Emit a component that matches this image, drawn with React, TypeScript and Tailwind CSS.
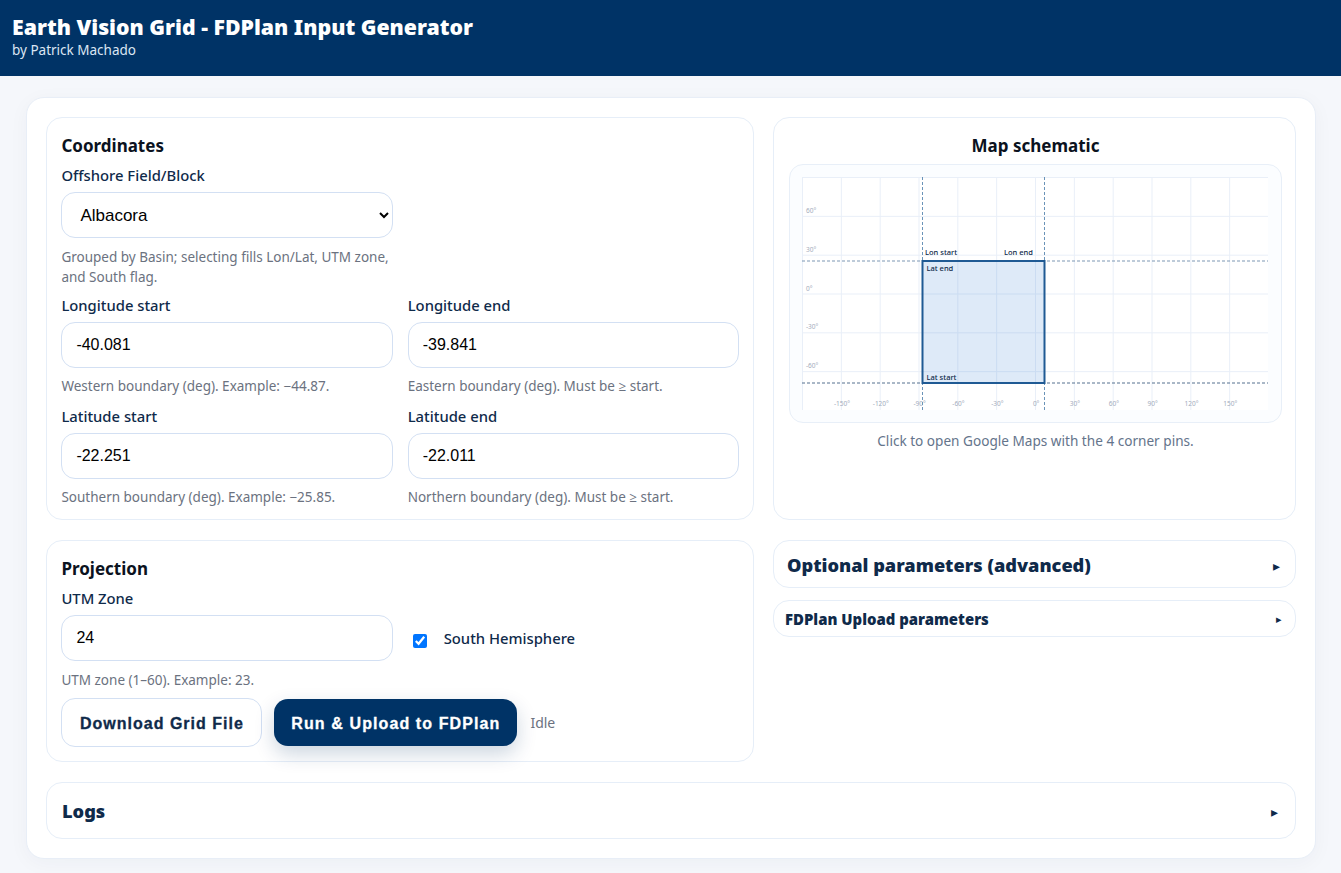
import React from "react";

const sans = "font-['Noto_Sans','Open_Sans',sans-serif]";
const LAT = [60, 30, 0, -30, -60];
const LON = [-150, -120, -90, -60, -30, 0, 30, 60, 90, 120, 150];

function Field({ label, value, hint }: { label: string; value: string; hint: string }) {
  return (
    <div>
      <label className="block text-[14.8px] leading-[20px] font-medium text-[#0f2a4a] mb-[7px]">{label}</label>
      <input
        defaultValue={value}
        className="block w-full h-[46px] rounded-[14px] border border-[#d3e0f3] bg-white pl-[14px] pr-[15px] text-[16px] text-black font-['Liberation_Sans',sans-serif] outline-none"
      />
      <p className="mt-[8px] text-[13.5px] leading-[20px] text-[#6b7280]">{hint}</p>
    </div>
  );
}

function Map() {
  const x0 = 0.5;
  const s = 466 / 360;
  return (
    <svg width="466" height="233" viewBox="0 0 466 233" className="block">
      <rect x="0" y="0" width="466" height="233" fill="#ffffff" />
      {Array.from({ length: 13 }).map((_, i) => (
        <line key={i} x1={x0 + i * 30 * s} y1="0" x2={x0 + i * 30 * s} y2="233" stroke="#e9eff8" strokeWidth="1" />
      ))}
      {Array.from({ length: 7 }).map((_, i) => (
        <line key={i} x1="0" y1={0.5 + i * 30 * s} x2="466" y2={0.5 + i * 30 * s} stroke="#e9eff8" strokeWidth="1" />
      ))}
      {LAT.map((v, i) => (
        <text key={v} x="4" y={36 + i * 38.83} fontSize="6.5" fill="#a3acbc" fontFamily="Noto Sans, sans-serif">{v}°</text>
      ))}
      {LON.map((v, i) => (
        <text key={v} x={40 + i * 38.83} y="229" fontSize="6.5" textAnchor="middle" fill="#a3acbc" fontFamily="Noto Sans, sans-serif">{v}°</text>
      ))}
      <line x1="120.5" y1="0" x2="120.5" y2="233" stroke="#6a93b8" strokeWidth="1" strokeDasharray="3 2" />
      <line x1="242.5" y1="0" x2="242.5" y2="233" stroke="#6a93b8" strokeWidth="1" strokeDasharray="3 2" />
      <line x1="0" y1="84" x2="466" y2="84" stroke="#7d97b3" strokeWidth="1" strokeDasharray="3 2" />
      <line x1="0" y1="206" x2="466" y2="206" stroke="#55708f" strokeWidth="1" strokeDasharray="3 2" />
      <rect x="120.5" y="84" width="122" height="122" fill="#1f6fd0" fillOpacity="0.15" stroke="#1f5a94" strokeWidth="2" />
      <g fontSize="7.5" fontWeight="500" fill="#0f2a4a" fontFamily="Noto Sans, sans-serif">
        <text x="123" y="78">Lon start</text>
        <text x="202" y="78">Lon end</text>
        <text x="124.5" y="94">Lat end</text>
        <text x="124.5" y="203">Lat start</text>
      </g>
    </svg>
  );
}

function Collapsed({ title, cls, arrow }: { title: string; cls: string; arrow: string }) {
  return (
    <div className={`flex items-center justify-between rounded-[16px] border border-[#e6eef8] bg-white ${cls}`}>
      <span className="font-black text-[#0f2a4a]">{title}</span>
      <span className={`text-[#0f2a4a] ${arrow}`}>▸</span>
    </div>
  );
}

export default function App() {
  return (
    <div className={`min-h-[873px] bg-[#f5f7fb] ${sans}`}>
      <header className="h-[76px] bg-[#003366] px-[12px] pt-[13px] text-white">
        <h1 className="text-[21.27px] leading-[27px] font-black">Earth Vision Grid - FDPlan Input Generator</h1>
        <p className="text-[13.5px] leading-[18px] mt-[1px] text-[#dbe6f3]">by Patrick Machado</p>
      </header>
      <main className="pl-[26px] pr-[25px] pt-[21px]">
        <div className="h-[762px] rounded-[18px] border border-[#e8eef7] bg-white p-[19px] shadow-[0_4px_20px_rgba(15,42,74,0.04)]">
          <div className="grid grid-cols-[708px_523px] gap-x-[19px] gap-y-[20px]">
            <section className="h-[403px] rounded-[16px] border border-[#e6eef8] pl-[14.4px] pr-[14px] pt-[16px]">
              <h2 className="text-[17px] leading-[24px] font-bold text-[#0b1220] mb-[7px]">Coordinates</h2>
              <div className="grid grid-cols-2 gap-x-[15px] gap-y-[10px]">
                <div className="mb-[-2px]">
                  <label className="block text-[14.8px] leading-[20px] font-medium text-[#0f2a4a] mb-[7px]">Offshore Field/Block</label>
                  <select className="block w-full h-[46px] rounded-[14px] border border-[#d3e0f3] bg-white px-[14px] text-[17px] text-black font-['Liberation_Sans',sans-serif] outline-none">
                    <option>Albacora</option>
                  </select>
                  <p className="mt-[9px] text-[13.5px] leading-[20px] text-[#6b7280]">Grouped by Basin; selecting fills Lon/Lat, UTM zone, and South flag.</p>
                </div>
                <div />
                <Field label="Longitude start" value="-40.081" hint="Western boundary (deg). Example: −44.87." />
                <Field label="Longitude end" value="-39.841" hint="Eastern boundary (deg). Must be ≥ start." />
                <Field label="Latitude start" value="-22.251" hint="Southern boundary (deg). Example: −25.85." />
                <Field label="Latitude end" value="-22.011" hint="Northern boundary (deg). Must be ≥ start." />
              </div>
            </section>

            <section className="h-[403px] rounded-[16px] border border-[#e6eef8] pl-[15px] pr-[13px] pt-[16px]">
              <h2 className="text-center text-[17px] leading-[24px] font-bold text-[#0b1220] mb-[6px]">Map schematic</h2>
              <div className="rounded-[14px] border border-[#e8eff8] bg-[#fbfdff] p-[12px]">
                <Map />
              </div>
              <p className="mt-[8px] text-center text-[13.6px] leading-[20px] text-[#64748b]">Click to open Google Maps with the 4 corner pins.</p>
            </section>

            <section className="h-[222px] rounded-[16px] border border-[#e6eef8] pl-[14.4px] pr-[14px] pt-[16px]">
              <h2 className="text-[17px] leading-[24px] font-bold text-[#0b1220] mb-[7px]">Projection</h2>
              <label className="block text-[14.8px] leading-[20px] font-medium text-[#0f2a4a] mb-[7px]">UTM Zone</label>
              <div className="grid grid-cols-2 gap-x-[15px]">
                <input defaultValue="24" className="block w-full h-[46px] rounded-[14px] border border-[#d3e0f3] bg-white pl-[14px] pr-[15px] text-[16px] text-black font-['Liberation_Sans',sans-serif] outline-none" />
                <label className="flex items-center gap-[17px] pl-[5px] text-[14.8px] font-medium text-[#0f2a4a]">
                  <input type="checkbox" defaultChecked className="w-[14px] h-[14px] mt-[5px]" />
                  South Hemisphere
                </label>
              </div>
              <p className="mt-[9px] text-[13.5px] leading-[20px] text-[#6b7280]">UTM zone (1–60). Example: 23.</p>
              <div className="mt-[8px] flex items-center gap-[12px] font-['Liberation_Sans',sans-serif]">
                <button className="h-[49px] w-[201px] pt-[2px] rounded-[14px] border border-[#d3e0f3] bg-white text-[16px] tracking-[1px] font-bold text-[#0f2a4a] [-webkit-text-stroke:0.3px]">Download Grid File</button>
                <button className="h-[47px] w-[243px] pt-[2px] rounded-[14px] bg-[#003366] text-[16px] tracking-[1.1px] font-bold text-white shadow-[0_8px_20px_rgba(0,51,102,0.2)] [-webkit-text-stroke:0.3px]">Run &amp; Upload to FDPlan</button>
                <span className={`ml-[1px] mt-[-1px] text-[14px] text-[#6b7280] ${sans}`}>Idle</span>
              </div>
            </section>

            <div className="flex flex-col gap-[12px]">
              <Collapsed title="Optional parameters (advanced)" cls="h-[48px] pt-[3px] pl-[13px] pr-[15px] text-[18.2px]" arrow="text-[14px]" />
              <Collapsed title="FDPlan Upload parameters" cls="h-[37px] pt-[2px] pl-[11px] pr-[13px] text-[14.9px]" arrow="text-[11px]" />
            </div>
          </div>
          <div className="mt-[20px]">
            <Collapsed title="Logs" cls="h-[57px] pt-[2px] pl-[15px] pr-[17px] text-[18.2px]" arrow="text-[14px]" />
          </div>
        </div>
      </main>
    </div>
  );
}
